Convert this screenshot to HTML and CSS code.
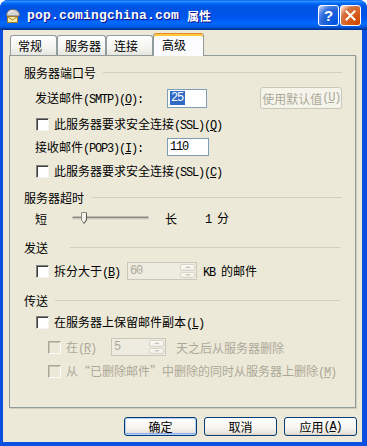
FILE: index.html
```html
<!DOCTYPE html>
<html lang="zh-CN">
<head>
<meta charset="utf-8">
<title>pop.comingchina.com 属性</title>
<link rel="stylesheet" href="styles.css">
</head>
<body>
<div class="window">
  <header class="titlebar">
    <svg class="app-icon" width="16" height="16" viewBox="0 0 16 16" aria-hidden="true">
      <path d="M1.5 8 C1.5 3.5 4 1.5 8 1.5 C12 1.5 14.5 3.5 14.5 8 Z" fill="#D6D6D6" stroke="#6C6C6C"/>
      <path d="M3.5 5 C4.5 3.5 6 3 8 3" fill="none" stroke="#FFFFFF"/>
      <rect x="2.5" y="8.5" width="10" height="6" fill="#FCEBA0" stroke="#9C7B2E"/>
      <path d="M2.5 8.5 L7.5 12 L12.5 8.5" fill="none" stroke="#9C7B2E"/>
    </svg>
    <h1 class="title"><span class="title-en">pop.comingchina.com</span><span class="title-zh">属性</span></h1>
    <div class="caption-buttons">
      <span class="cap-btn cap-help">?</span>
      <span class="cap-btn cap-close"><svg width="11" height="11" viewBox="0 0 11 11" aria-hidden="true"><path d="M1.5 1.5 L9.5 9.5 M9.5 1.5 L1.5 9.5" stroke="#fff" stroke-width="2" stroke-linecap="square"/></svg></span>
    </div>
  </header>

  <main class="client">
    <nav class="tabs">
      <span class="tab tab-general">常规</span>
      <span class="tab tab-servers">服务器</span>
      <span class="tab tab-connect">连接</span>
      <span class="tab tab-advanced is-active">高级</span>
    </nav>

    <section class="panel">
      <div class="group-head head-ports"><span>服务器端口号</span><i class="rule"></i></div>
      <div class="row row-smtp field-row">
        <span class="field-label">发送邮件<span class="en">(SMTP)(<u>O</u>):</span></span>
        <span class="textbox textbox-smtp"><span class="selected-text">25</span></span>
        <span class="btn btn-disabled btn-defaults">使用默认值<span class="en">(<u>U</u>)</span></span>
      </div>
      <div class="row row-ssl1 check-row">
        <span class="check"></span><span class="check-label">此服务器要求安全连接<span class="en">(SSL)(<u>Q</u>)</span></span>
      </div>
      <div class="row row-pop3 field-row">
        <span class="field-label">接收邮件<span class="en">(POP3)(<u>I</u>):</span></span>
        <span class="textbox textbox-pop3"><span class="en">110</span></span>
      </div>
      <div class="row row-ssl2 check-row">
        <span class="check"></span><span class="check-label">此服务器要求安全连接<span class="en">(SSL)(<u>C</u>)</span></span>
      </div>

      <div class="group-head head-timeout"><span>服务器超时</span><i class="rule"></i></div>
      <div class="row row-slider field-row">
        <span>短</span>
        <svg class="slider" width="77" height="14" viewBox="0 0 77 14" aria-hidden="true">
          <rect x="0.5" y="5.5" width="76" height="2" fill="#8B8B86"/>
          <rect x="0.5" y="7.5" width="76" height="1" fill="#D6D4C8"/>
          <path d="M9.5 1.5 H14.5 V9 L12 12.5 L9.5 9 Z" fill="#F4F3EC" stroke="#8A8A86"/>
          <path d="M14.5 2 V9 L12 12.5" fill="none" stroke="#55554F"/>
        </svg>
        <span class="slider-long">长</span>
        <span class="slider-value"><span class="en">1 </span>分</span>
      </div>

      <div class="group-head head-send"><span>发送</span><i class="rule"></i></div>
      <div class="row row-split check-row">
        <span class="check"></span><span class="check-label">拆分大于<span class="en">(<u>B</u>)</span></span>
        <span class="spinner spinner-split"><span class="en spinner-value">60</span><span class="spin-arrows"><i class="spin-up"></i><i class="spin-down"></i></span></span>
        <span class="split-unit"><span class="en">KB </span>的邮件</span>
      </div>

      <div class="group-head head-delivery"><span>传送</span><i class="rule"></i></div>
      <div class="row row-keep check-row">
        <span class="check"></span><span class="check-label">在服务器上保留邮件副本<span class="en">(<u>L</u>)</span></span>
      </div>
      <div class="row row-days sub-row is-disabled">
        <span class="check check-disabled"></span><span class="check-label">在<span class="en">(<u>R</u>)</span></span>
        <span class="spinner spinner-days"><span class="en spinner-value">5</span><span class="spin-arrows"><i class="spin-up"></i><i class="spin-down"></i></span></span>
        <span class="days-text">天之后从服务器删除</span>
      </div>
      <div class="row row-remove sub-row is-disabled">
        <span class="check check-disabled"></span><span class="check-label">从“已删除邮件”中删除的同时从服务器上删除<span class="en">(<u>M</u>)</span></span>
      </div>
    </section>

    <footer class="dialog-buttons">
      <span class="btn btn-default">确定</span>
      <span class="btn">取消</span>
      <span class="btn">应用<span class="en">(<u>A</u>)</span></span>
    </footer>
  </main>
</div>
</body>
</html>
```

FILE: styles.css
```css
html, body {
  margin: 0;
  padding: 0;
  background: #ffffff;
}

.window {
  width: 367px;
  height: 446px;
  box-sizing: border-box;
  display: flex;
  flex-direction: column;
  background: #0A4FDF;
  border-radius: 8px 8px 0 0;
  overflow: hidden;
  font-family: "Noto Sans CJK SC", "Noto Sans", sans-serif;
  font-size: 12px;
  color: #000;
}

.en {
  font-family: "Liberation Mono", monospace;
  font-size: 12px;
  letter-spacing: -1.2px;
}

u {
  text-decoration: underline;
  text-underline-offset: 1px;
}

/* ---------- title bar ---------- */
.titlebar {
  height: 30px;
  flex: none;
  display: flex;
  align-items: center;
  padding: 0 6px 0 5px;
  background: linear-gradient(to bottom,
    #0058ee 0%, #3593ff 4%, #288eff 6%, #127dff 8%, #036ffc 10%,
    #0262ee 14%, #0057e5 20%, #0054e3 24%, #0055eb 56%, #005bf5 66%,
    #026afe 76%, #0062ef 86%, #0052d6 92%, #0040ab 94%, #003092 100%);
}

.app-icon {
  flex: none;
  margin-top: 1px;
}

.title {
  margin: 0 0 0 6px;
  flex: 1;
  display: flex;
  align-items: center;
  color: #fff;
  font-weight: bold;
  text-shadow: 1px 1px #0F1089;
  white-space: nowrap;
}

.title-en {
  font-family: "Liberation Mono", monospace;
  font-size: 13px;
  letter-spacing: 0.2px;
}

.title-zh {
  font-family: "Noto Sans CJK SC", sans-serif;
  font-size: 12px;
  margin-left: 8px;
}

.caption-buttons {
  display: flex;
  gap: 1px;
}

.cap-btn {
  width: 21px;
  height: 21px;
  box-sizing: border-box;
  border: 1px solid #fff;
  border-radius: 3px;
  display: flex;
  align-items: center;
  justify-content: center;
  color: #fff;
}

.cap-help {
  background: radial-gradient(circle at 90% 90%, #0054e9 0%, #2263d5 55%, #4479e4 70%, #a3bbec 90%, #fff 100%);
  font-family: "Liberation Sans", sans-serif;
  font-weight: bold;
  font-size: 15px;
  line-height: 1;
}

.cap-close {
  background: radial-gradient(circle at 90% 90%, #cc4600 0%, #dc6527 55%, #cd7546 70%, #ffccb2 90%, #fff 100%);
}

/* ---------- client ---------- */
.client {
  flex: 1;
  margin: 0 5px 4px 3px;
  background: #ECE9D8;
  display: flex;
  flex-direction: column;
}

.tabs {
  height: 22px;
  margin: 3px 0 0 7px;
  display: flex;
  align-items: flex-end;
}

.tab {
  height: 20px;
  box-sizing: border-box;
  border: 1px solid #919B9C;
  border-bottom: none;
  border-radius: 3px 3px 0 0;
  background: linear-gradient(to bottom, #ffffff, #f4f4f0 60%, #e6e5de);
  padding: 1px 0 0 7px;
  line-height: 18px;
  white-space: nowrap;
}

.tab-general { width: 47px; }
.tab-servers { width: 49px; }
.tab-connect { width: 47px; }

.tab-advanced {
  width: 51px;
}

.tab.is-active {
  height: 23px;
  margin-bottom: -1px;
  position: relative;
  z-index: 1;
  border-top: 1px solid #E68B2C;
  box-shadow: inset 0 2px 0 #FFC83C;
  background: #FCFCFE;
  padding: 1px 0 0 8px;
  line-height: 19px;
}

.panel {
  height: 353px;
  box-sizing: border-box;
  margin: 0 6px;
  border: 1px solid #919B9C;
  box-shadow: 1px 1px 0 #D0CEBF;
  background: #ECE9D8;
  padding: 6px 13px 0 14px;
  display: flex;
  flex-direction: column;
}

.group-head,
.row {
  height: 20px;
  flex: none;
  display: flex;
  align-items: center;
  white-space: nowrap;
}

.rule {
  flex: 1;
  height: 0;
  border-top: 1px solid #D0D0BF;
  margin-left: 7px;
}

.head-timeout .rule { margin-left: 8px; }
.head-send .rule { margin-left: 22px; margin-right: 2px; }
.head-delivery .rule { margin-left: 7px; margin-right: 2px; }

.field-row { padding-left: 11px; }
.check-row { padding-left: 12px; }
.sub-row { padding-left: 24px; }

.row-smtp { margin-top: 6px; }
.row-ssl1 { margin-top: 6px; }
.row-pop3 { margin-top: 3px; }
.row-ssl2 { margin-top: 4px; }
.head-timeout { margin-top: 6px; }
.row-slider { margin-top: 1px; }
.head-send { margin-top: 9px; }
.row-split { margin-top: 4px; }
.head-delivery { margin-top: 9px; }
.row-keep { margin-top: 2px; }
.row-days { margin-top: 5px; }
.row-remove { margin-top: 4px; }

.field-label {
  width: 132px;
  flex: none;
}

.textbox {
  width: 42px;
  height: 19px;
  box-sizing: border-box;
  border: 1px solid #7F9DB9;
  background: #fff;
  display: flex;
  align-items: center;
  padding-left: 2px;
}

.textbox-pop3 { height: 18px; }

.selected-text {
  font-family: "Liberation Mono", monospace;
  font-size: 12px;
  letter-spacing: -1.2px;
  background: #316AC5;
  color: #fff;
  padding: 0 2px 0 1px;
  line-height: 14px;
}

.check {
  width: 13px;
  height: 13px;
  box-sizing: border-box;
  flex: none;
  background: #fff;
  border: 1px solid;
  border-color: #808080 #F4F4F0 #F4F4F0 #808080;
  box-shadow: inset 1px 1px 0 #404040;
}

.check-disabled {
  background: #ECE9D8;
  border-color: #ACA899 #FBFBF7 #FBFBF7 #ACA899;
  box-shadow: inset 1px 1px 0 #C9C6B6;
}

.check-label { margin-left: 5px; }

.is-disabled { color: #ACA899; }

/* slider */
.slider {
  margin-left: 25px;
  flex: none;
}

.slider-long { margin-left: 16px; }
.slider-value { margin-left: 28px; }

/* spinner */
.spinner {
  height: 18px;
  box-sizing: border-box;
  border: 1px solid #C9C7BA;
  background: #EEECE0;
  display: flex;
  align-items: center;
  justify-content: space-between;
  padding: 1px 1px 1px 2px;
  color: #ACA899;
}

.spinner-split {
  width: 70px;
  margin-left: 7px;
}

.spinner-days {
  width: 55px;
  margin-left: 15px;
}

.spin-arrows {
  width: 15px;
  height: 14px;
  display: flex;
  flex-direction: column;
  gap: 1px;
}

.spin-up,
.spin-down {
  flex: 1;
  border: 1px solid #D8D5C6;
  border-radius: 2px;
  background: linear-gradient(to bottom, #FBFBF8, #EFEEE6);
  display: flex;
  align-items: center;
  justify-content: center;
}

.spin-up::after,
.spin-down::after {
  content: "";
  width: 0;
  height: 0;
  border-left: 3px solid transparent;
  border-right: 3px solid transparent;
}

.spin-up::after { border-bottom: 2px solid #C9C7BA; }
.spin-down::after { border-top: 2px solid #C9C7BA; }

.split-unit { margin-left: 6px; }
.days-text { margin-left: 10px; }

/* buttons */
.btn {
  height: 19px;
  box-sizing: border-box;
  border: 1px solid #003C74;
  border-radius: 3px;
  background: linear-gradient(to bottom, #ffffff 0%, #F5F4F0 60%, #E6E3DA 90%, #D6D0C5 100%);
  display: flex;
  align-items: center;
  justify-content: center;
  white-space: nowrap;
}

.btn-default {
  box-shadow: inset 0 0 0 1px #B9D1F9, inset 0 -1px 0 1px #8DAEEC;
}

.btn-disabled {
  border-color: #C9C7BA;
  background: #F5F4EA;
  color: #ACA899;
}

.btn-defaults {
  width: 85px;
  height: 22px;
  margin-left: 53px;
}

.dialog-buttons {
  margin-top: 9px;
  padding-right: 5px;
  display: flex;
  justify-content: flex-end;
  gap: 7px;
}

.dialog-buttons .btn {
  width: 73px;
}
```
